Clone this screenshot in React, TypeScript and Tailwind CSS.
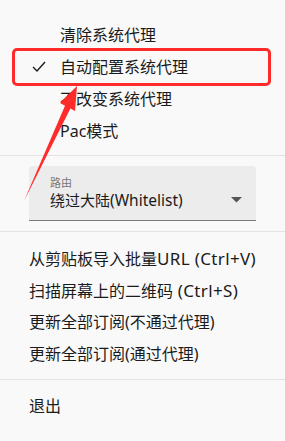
const font = { fontFamily: '"Noto Sans", "Noto Sans CJK SC", sans-serif' };

function Row({ children, indent = false, check = false }: { children: React.ReactNode; indent?: boolean; check?: boolean }) {
  return (
    <div className={`relative flex h-[32px] items-center text-[16px] text-[#1b1b1b] ${indent ? "pl-[60px]" : "pl-[29px]"}`}>
      {check && (
        <svg className="absolute left-[32px] top-[10px]" width="14" height="12" viewBox="0 0 14 12">
          <polyline points="1,6 5,10 13,1" fill="none" stroke="#1b1b1b" strokeWidth="1.4" />
        </svg>
      )}
      <span className="whitespace-pre leading-none">{children}</span>
    </div>
  );
}

function Latin({ children }: { children: React.ReactNode }) {
  return <span className="text-[17px] tracking-[0.35px]">{children}</span>;
}

function Divider() {
  return <div className="h-px w-full bg-[#e3e3e3]" />;
}

export default function App() {
  return (
    <div className="relative h-[441px] w-[285px] overflow-hidden bg-[#f9f9f9]" style={font}>
      <div className="pt-[19px]">
        <Row indent>清除系统代理</Row>
        <Row indent check>自动配置系统代理</Row>
        <Row indent>不改变系统代理</Row>
        <Row indent>Pac模式</Row>
      </div>

      <div className="mt-[8px]">
        <Divider />
      </div>

      <div className="px-[29px] pt-[10px] pb-[10px]">
        <div className="relative h-[55px] w-[227px] rounded-t-[4px] border-b border-[#7a7a7a] bg-[#ececec] pl-[21px]">
          <div className="pt-[10px] text-[11px] leading-[14px] text-[#777]">路由</div>
          <div className="text-[15px] leading-[20px] text-[#1b1b1b]">
            绕过大陆<span className="text-[15.5px]">(Whitelist)</span>
          </div>
          <svg className="absolute right-[14px] top-[31px]" width="11" height="6" viewBox="0 0 11 6">
            <polygon points="0,0 11,0 5.5,5.5" fill="#555" />
          </svg>
        </div>
      </div>

      <Divider />

      <div className="pt-[10px]">
        <Row>
          从剪贴板导入批量<Latin>URL (Ctrl+V)</Latin>
        </Row>
        <Row>
          扫描屏幕上的二维码<Latin> (Ctrl+S)</Latin>
        </Row>
        <Row>更新全部订阅(不通过代理)</Row>
        <Row>更新全部订阅(通过代理)</Row>
      </div>

      <div className="mt-[9px]">
        <Divider />
      </div>

      <div className="pt-[10px]">
        <Row>退出</Row>
      </div>

      {/* annotation overlay */}
      <div className="absolute left-[12px] top-[48px] h-[38px] w-[259px] rounded-[5px] border-[3px] border-[#ff2b2b]" />
      <svg className="absolute left-0 top-0" width="285" height="441" viewBox="0 0 285 441">
        <polygon points="77,86 75,111 70.4,108.5 24,201 65,105.8 60,103" fill="#ff2b2b" />
      </svg>
    </div>
  );
}
